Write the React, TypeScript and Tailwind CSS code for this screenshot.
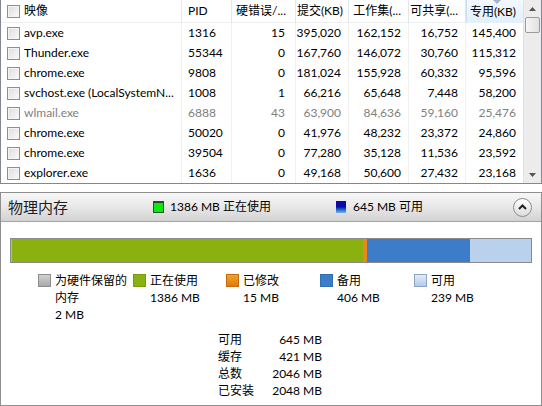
import React from 'react';

type Row = {
  name: string;
  pid: string;
  faults: string;
  commit: string;
  working: string;
  shared: string;
  priv: string;
  dim?: boolean;
};

const rows: Row[] = [
  { name: 'avp.exe', pid: '1316', faults: '15', commit: '395,020', working: '162,152', shared: '16,752', priv: '145,400' },
  { name: 'Thunder.exe', pid: '55344', faults: '0', commit: '167,760', working: '146,072', shared: '30,760', priv: '115,312' },
  { name: 'chrome.exe', pid: '9808', faults: '0', commit: '181,024', working: '155,928', shared: '60,332', priv: '95,596' },
  { name: 'svchost.exe (LocalSystemN...', pid: '1008', faults: '1', commit: '66,216', working: '65,648', shared: '7,448', priv: '58,200' },
  { name: 'wlmail.exe', pid: '6888', faults: '43', commit: '63,900', working: '84,636', shared: '59,160', priv: '25,476', dim: true },
  { name: 'chrome.exe', pid: '50020', faults: '0', commit: '41,976', working: '48,232', shared: '23,372', priv: '24,860' },
  { name: 'chrome.exe', pid: '39504', faults: '0', commit: '77,280', working: '35,128', shared: '11,536', priv: '23,592' },
  { name: 'explorer.exe', pid: '1636', faults: '0', commit: '49,168', working: '50,600', shared: '27,432', priv: '23,168' },
];

// memory breakdown in MB
const segments = [
  { mb: 2, color: '#b5b5b5' },
  { mb: 1386, color: '#8ab10f' },
  { mb: 15, color: '#e6891a' },
  { mb: 406, color: '#3c7cc9' },
  { mb: 239, color: '#bad1ee' },
];

const legend = [
  { lines: ['为硬件保留的', '内存', '2 MB'], box: 'bg-gradient-to-b from-[#d2d2d2] to-[#a9a9a9] border-[#8d8d8d]' },
  { lines: ['正在使用', '1386 MB'], box: 'bg-[#8ab10f] border-[#7a9c0c]' },
  { lines: ['已修改', '15 MB'], box: 'bg-gradient-to-b from-[#f2a030] to-[#dc7a0c] border-[#c56b08]' },
  { lines: ['备用', '406 MB'], box: 'bg-[#3c7cc9] border-[#346db2]' },
  { lines: ['可用', '239 MB'], box: 'bg-gradient-to-b from-[#e2ecf9] to-[#b3cbec] border-[#8aa4c8]' },
];

const summary = [
  ['可用', '645 MB'],
  ['缓存', '421 MB'],
  ['总数', '2046 MB'],
  ['已安装', '2048 MB'],
];

function CheckBox() {
  return (
    <span className="w-[13px] h-[13px] shrink-0 border border-[#8f8f8f] bg-gradient-to-br from-[#dcdcdc] to-[#fbfbfb] shadow-[inset_0_0_0_1px_#f4f4f4]" />
  );
}

const cell = 'h-[20px] flex items-center border-r border-[#f1f1f1]';
const num = `${cell} justify-end pr-[7px]`;
const head = 'h-[23px] flex items-center whitespace-nowrap border-r border-[#e3e6ea] border-b border-b-[#eeeeee]';

function ScrollArrow({ up }: { up?: boolean }) {
  return (
    <div className="h-[17px] flex items-center justify-center">
      <svg width="7" height="4" viewBox="0 0 7 4">
        {up ? <path d="M0 4 L3.5 0 L7 4 Z" fill="#555" /> : <path d="M0 0 L3.5 4 L7 0 Z" fill="#555" />}
      </svg>
    </div>
  );
}

export default function App() {
  const total = segments.reduce((s, x) => s + x.mb, 0);

  return (
    <div className="w-[542px] h-[406px] overflow-hidden bg-white text-[12px] text-black font-['Lato','Noto_Sans_CJK_SC',sans-serif]">
      {/* process list */}
      <div className="h-[184px] flex border-l border-r border-b border-[#828790]">
        <div className="w-[522px] grid grid-cols-[181px_50px_64px_53px_60px_57px_57px] content-start">
          <div className={`${head} pl-[6px] gap-[4px]`}>
            <CheckBox />
            <span>映像</span>
          </div>
          <div className={`${head} pl-[6px]`}>PID</div>
          <div className={`${head} justify-end pr-[9px]`}>硬错误/...</div>
          <div className={`${head} justify-end pr-[5px]`}>提交(KB)</div>
          <div className={`${head} justify-end pr-[7px]`}>工作集(...</div>
          <div className={`${head} justify-end pr-[7px]`}>可共享(...</div>
          <div className="relative h-[23px] flex items-center justify-end whitespace-nowrap pr-[7px] border-l border-[#c9dff2] bg-gradient-to-b from-[#f2f8fe] to-[#e3effa]">
            <svg className="absolute top-0 left-[26px]" width="8" height="4" viewBox="0 0 8 4">
              <path d="M0 0 L4 4 L8 0 Z" fill="#a3b4c9" />
            </svg>
            专用(KB)
          </div>

          {rows.map((r, i) => {
            const tone = r.dim ? 'text-[#808080]' : '';
            return (
              <React.Fragment key={i}>
                <div className={`${cell} ${tone} pl-[6px] gap-[4px] whitespace-nowrap`}>
                  <CheckBox />
                  <span>{r.name}</span>
                </div>
                <div className={`${cell} ${tone} pl-[6px]`}>{r.pid}</div>
                <div className={`${cell} ${tone} justify-end pr-[10px]`}>{r.faults}</div>
                <div className={`${num} ${tone}`}>{r.commit}</div>
                <div className={`${num} ${tone}`}>{r.working}</div>
                <div className={`${num} ${tone}`}>{r.shared}</div>
                <div className={`h-[20px] flex items-center justify-end pr-[7px] ${tone}`}>{r.priv}</div>
              </React.Fragment>
            );
          })}
        </div>

        {/* scrollbar */}
        <div className="w-[18px] flex flex-col bg-[#ececec] border-l border-[#e2e2e2]">
          <ScrollArrow up />
          <div className="mx-[1px] h-[16px] rounded-[2px] border border-[#9b9b9b] bg-gradient-to-r from-[#f6f6f6] to-[#e1e1e1]" />
          <div className="flex-1" />
          <ScrollArrow />
        </div>
      </div>

      {/* physical memory panel */}
      <div className="mt-[8px] h-[214px] border border-[#8f8f8f] flex flex-col">
        <div className="h-[29px] flex items-center bg-gradient-to-b from-[#f7f7f7] via-[#e8e8e8] to-[#d2d2d2] border-b border-[#a3a3a3]">
          <span className="w-[152px] pl-[7px] text-[15px] text-[#1c1c1c]">物理内存</span>
          <div className="w-[183px] flex items-center gap-[6px]">
            <span className="w-[11px] h-[12px] border border-[#1f5a1f] border-t-[2px] border-t-[#244d24] bg-[#12e612]" />
            <span>1386 MB 正在使用</span>
          </div>
          <div className="flex-1 flex items-center gap-[7px]">
            <span className="w-[10px] h-[12px] bg-gradient-to-b from-[#0a0aa8] via-[#0a0aa8] to-[#76b4f4]" />
            <span>645 MB 可用</span>
          </div>
          <div className="mr-[9px] w-[19px] h-[19px] rounded-full border border-[#8c8c8c] bg-gradient-to-b from-[#ffffff] to-[#dcdcdc] flex items-center justify-center">
            <svg width="9" height="6" viewBox="0 0 9 6">
              <path d="M1 5 L4.5 1.5 L8 5" fill="none" stroke="#222" strokeWidth="2" />
            </svg>
          </div>
        </div>

        <div className="px-[9px] pt-[16px]">
          <div className="h-[25px] flex border border-[#8a8a8a]">
            {segments.map((s, i) => (
              <div key={i} style={{ flexGrow: s.mb / total, flexBasis: 0, backgroundColor: s.color }} />
            ))}
          </div>
        </div>

        <div className="pl-[37px] pt-[9px] grid grid-cols-[95px_93px_94px_94px_auto]">
          {legend.map((l, i) => (
            <div key={i} className="flex gap-[4px]">
              <span className={`mt-[2px] w-[13px] h-[13px] shrink-0 border ${l.box}`} />
              <div className="flex flex-col leading-[17px] whitespace-nowrap">
                {l.lines.map((t, j) => (
                  <span key={j}>{t}</span>
                ))}
              </div>
            </div>
          ))}
        </div>

        <div className="ml-[217px] mt-[8px] grid grid-cols-[50px_54px] leading-[17px]">
          {summary.map(([k, v]) => (
            <React.Fragment key={k}>
              <span>{k}</span>
              <span className="text-right">{v}</span>
            </React.Fragment>
          ))}
        </div>
      </div>
    </div>
  );
}
